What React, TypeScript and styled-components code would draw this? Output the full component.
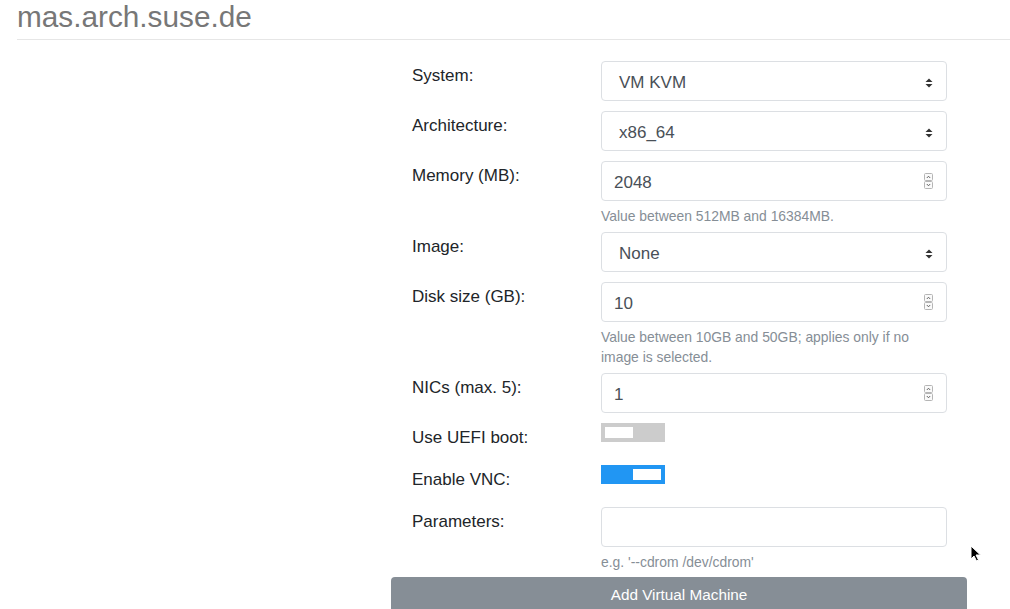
import React from "react";
import styled, { createGlobalStyle } from "styled-components";

const Global = createGlobalStyle`
  html, body { margin: 0; padding: 0; background: #fff; }
  body {
    font-family: "Liberation Sans", Arial, Helvetica, sans-serif;
    font-size: 17px;
    color: #212529;
    overflow: hidden;
  }
`;

const Page = styled.div`
  position: relative;
  width: 1010px;
  height: 609px;
  overflow: hidden;
`;

const Heading = styled.h3`
  margin: 0 0 0 17px;
  padding: 0 0 5px 0;
  font-size: 29.75px;
  line-height: 34px;
  font-weight: 400;
  color: #777;
  border-bottom: 1px solid #e6e6e6;
`;

const Form = styled.form`
  margin: 21px 0 0 391px;
  width: 576px;
`;

const Row = styled.div<{ $mb: number; $minH?: number }>`
  display: grid;
  grid-template-columns: 189px 346px;
  padding: 0 20px 0 21px;
  margin-bottom: ${(p) => p.$mb}px;
  min-height: ${(p) => p.$minH ?? 0}px;
`;

const Label = styled.label`
  padding-top: 2px;
  line-height: 25px;
  color: #212529;
`;

const Control = styled.div`
  display: flex;
  flex-direction: column;
`;

const Field = styled.div<{ $select?: boolean }>`
  box-sizing: border-box;
  height: 40px;
  display: flex;
  align-items: center;
  justify-content: space-between;
  padding: 0 13px 0 ${(p) => (p.$select ? 17 : 12)}px;
  border: 1px solid #dcdfe3;
  border-radius: 4px;
  color: #495057;
  font-size: 17px;
  background: #fff;
`;

const Value = styled.span`
  margin-top: 4px;
`;

const Help = styled.small`
  display: block;
  margin-top: 5px;
  font-size: 13.9px;
  line-height: 20px;
  color: #868e96;
`;

const Toggle = styled.div<{ $on?: boolean }>`
  box-sizing: border-box;
  width: 64px;
  height: 19px;
  padding: 4px;
  display: flex;
  justify-content: ${(p) => (p.$on ? "flex-end" : "flex-start")};
  background: ${(p) => (p.$on ? "#2196f3" : "#cccccc")};
`;

const Knob = styled.span`
  width: 28px;
  height: 11px;
  background: #fff;
`;

const Submit = styled.button`
  display: block;
  width: 576px;
  height: 38px;
  margin-top: 5px;
  padding: 0 0 2px 0;
  border: none;
  border-radius: 4px;
  background: #868e96;
  color: #fff;
  font-family: "Liberation Sans", Arial, Helvetica, sans-serif;
  font-size: 15.3px;
  line-height: 36px;
  text-align: center;
`;

const Cursor = styled.svg`
  position: absolute;
  left: 970px;
  top: 545px;
`;

const ArrowSvg = styled.svg`
  margin-top: 4px;
`;

const SelectArrows = () => (
  <ArrowSvg width="8" height="10" viewBox="0 0 8 10" aria-hidden>
    <polygon points="0.5,4 4,0.5 7.5,4" fill="#333" />
    <polygon points="0.5,6 4,9.5 7.5,6" fill="#333" />
  </ArrowSvg>
);

const Spinner = () => (
  <svg width="9" height="16" viewBox="0 0 9 16" aria-hidden>
    <rect x="0.5" y="0.5" width="8" height="7" rx="1" fill="#fafafa" stroke="#b5b5b5" />
    <rect x="0.5" y="8.5" width="8" height="7" rx="1" fill="#fafafa" stroke="#b5b5b5" />
    <polyline points="2.8,5 4.5,3.2 6.2,5" fill="none" stroke="#555" strokeWidth="0.9" />
    <polyline points="2.8,11 4.5,12.8 6.2,11" fill="none" stroke="#555" strokeWidth="0.9" />
  </svg>
);

const SelectField = ({ value }: { value: string }) => (
  <Field $select>
    <Value>{value}</Value>
    <SelectArrows />
  </Field>
);

const NumberField = ({ value }: { value: string }) => (
  <Field>
    <Value>{value}</Value>
    <Spinner />
  </Field>
);

export default function App() {
  return (
    <Page>
      <Global />
      <Heading>mas.arch.suse.de</Heading>
      <Form onSubmit={(e) => e.preventDefault()}>
        <Row $mb={10}>
          <Label>System:</Label>
          <Control>
            <SelectField value="VM KVM" />
          </Control>
        </Row>
        <Row $mb={10}>
          <Label>Architecture:</Label>
          <Control>
            <SelectField value="x86_64" />
          </Control>
        </Row>
        <Row $mb={6}>
          <Label>Memory (MB):</Label>
          <Control>
            <NumberField value="2048" />
            <Help>Value between 512MB and 16384MB.</Help>
          </Control>
        </Row>
        <Row $mb={10}>
          <Label>Image:</Label>
          <Control>
            <SelectField value="None" />
          </Control>
        </Row>
        <Row $mb={6}>
          <Label>Disk size (GB):</Label>
          <Control>
            <NumberField value="10" />
            <Help>
              Value between 10GB and 50GB; applies only if no
              <br />
              image is selected.
            </Help>
          </Control>
        </Row>
        <Row $mb={10}>
          <Label>NICs (max. 5):</Label>
          <Control>
            <NumberField value="1" />
          </Control>
        </Row>
        <Row $mb={10} $minH={32}>
          <Label>Use UEFI boot:</Label>
          <Control>
            <Toggle>
              <Knob />
            </Toggle>
          </Control>
        </Row>
        <Row $mb={10} $minH={32}>
          <Label>Enable VNC:</Label>
          <Control>
            <Toggle $on>
              <Knob />
            </Toggle>
          </Control>
        </Row>
        <Row $mb={0}>
          <Label>Parameters:</Label>
          <Control>
            <Field />
            <Help>e.g. '--cdrom /dev/cdrom'</Help>
          </Control>
        </Row>
        <Submit type="submit">Add Virtual Machine</Submit>
      </Form>
      <Cursor width="12" height="17" viewBox="0 0 12 17" aria-hidden>
        <path d="M1 1 L1 14 L4 11 L6.5 16 L8.5 15 L6 10 L10.5 10 Z" fill="#000" stroke="#fff" strokeWidth="1" />
      </Cursor>
    </Page>
  );
}
